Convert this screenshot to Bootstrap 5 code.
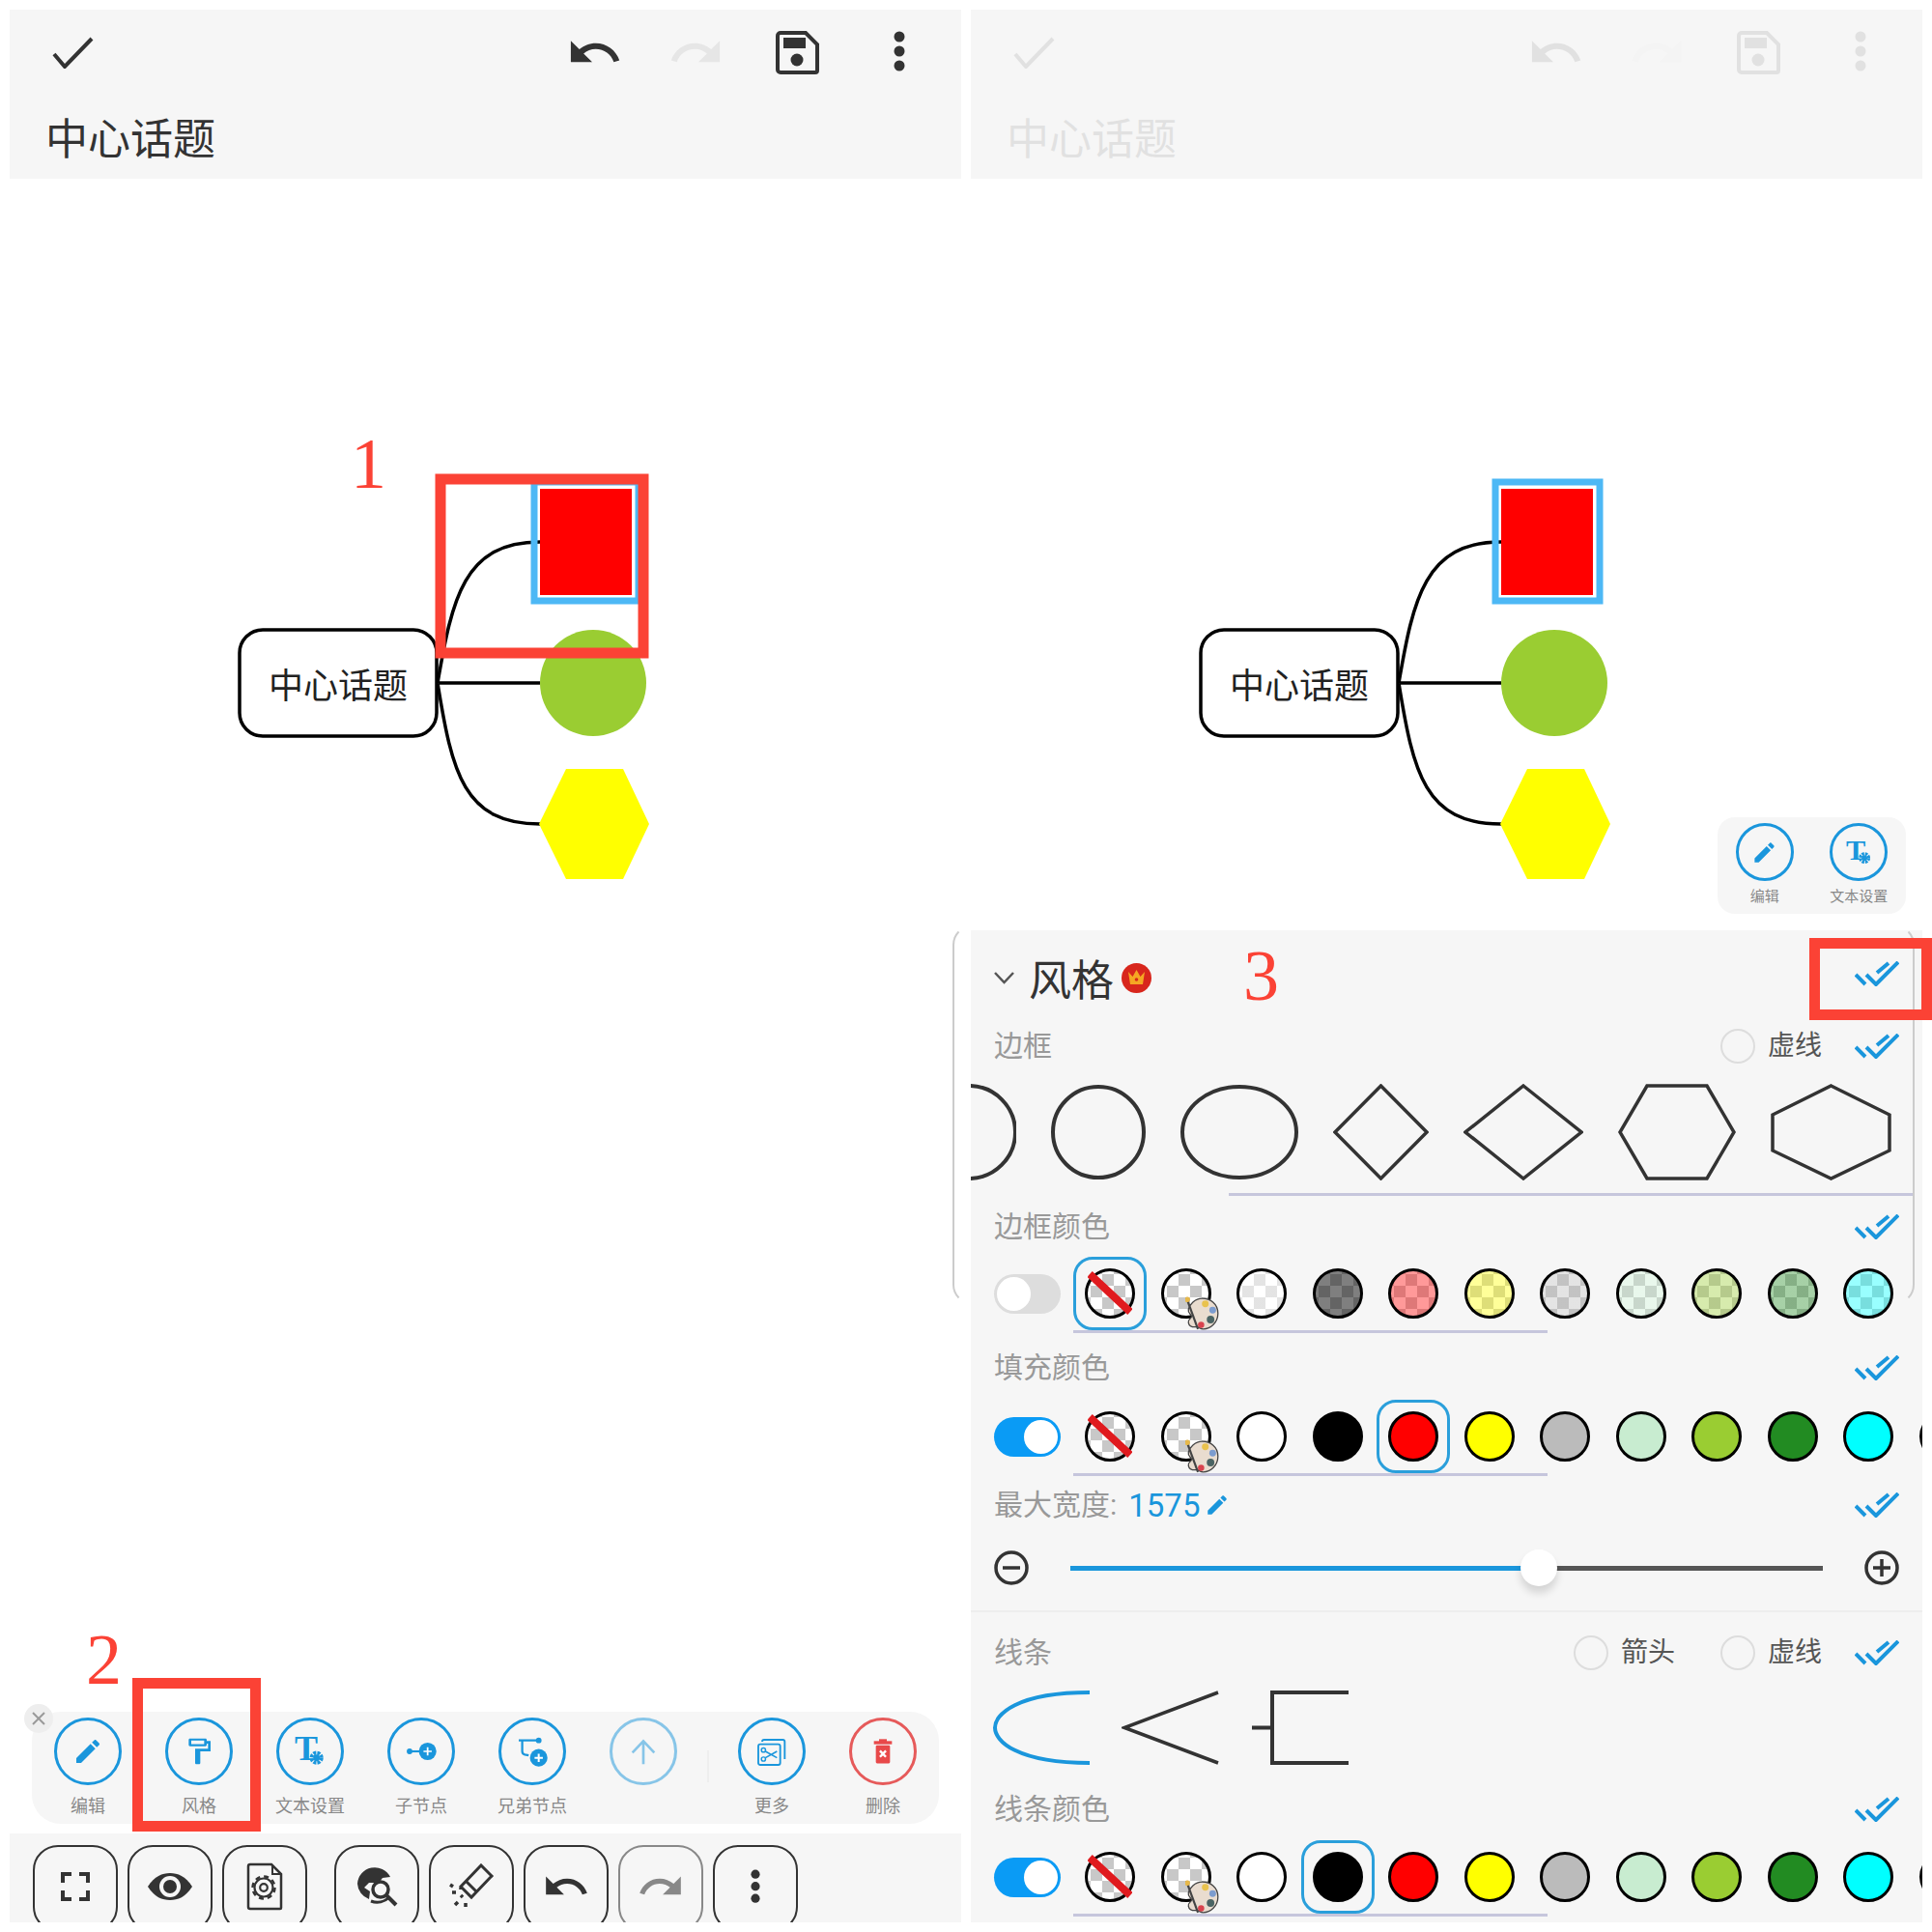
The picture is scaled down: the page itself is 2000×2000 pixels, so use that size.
<!doctype html>
<html lang="zh">
  <head>
    <meta charset="UTF-8" />
    <title>思维导图 风格</title>
    <link href="https://cdn.jsdelivr.net/npm/bootstrap@5.3.2/dist/css/bootstrap.min.css" rel="stylesheet" />
    <style>
      html, body { width: 2000px; height: 2000px; overflow: hidden; background: #fff; }
      body { font-family: Roboto, "Noto Sans CJK SC", sans-serif; line-height: 1; color: #333; }
      .stage { padding: 10px; gap: 10px; width: 2000px; height: 2000px; }
      .pane { width: 985px; height: 1980px; flex: 0 0 985px; position: relative; }

      /* top bar */
      .topbar { height: 175px; background: #f6f6f6; }
      .topbar-icons { height: 88px; padding-right: 12px; }
      .top-cell { width: 105px; }
      .top-cell-first { width: 130px; }
      .top-title { font-size: 44px; color: #333; padding-left: 37px; padding-top: 25px; }
      .topbar-dim > * { opacity: .1; }
      .ic-check { width: 43px; height: 33px; }
      .ic-undo { width: 59px; height: 59px; fill: #333; }
      .ic-redo-off { width: 59px; height: 59px; fill: #e6e6e6; }
      .ic-save { width: 45px; height: 45px; }
      .ic-dots { width: 12px; height: 44px; fill: #333; }
      .ic-dots-sm { width: 10px; height: 37px; fill: #333; }

      .map { width: 985px; height: 765px; display: block; }
      .map-node { font-size: 36px; fill: #222; font-family: "Noto Sans CJK SC", sans-serif; }
      .mark-no { font-family: "Liberation Serif", serif; fill: #fb4235; color: #fb4235; font-size: 74px; }

      /* floating action bar */
      .actions { margin: 0 23px 10px; height: 116px; background: #f6f6f6; border-radius: 30px; padding-left: .5px; position: relative; }
      .act-item { width: 115px; padding-top: 6px; }
      .act-circle { width: 70px; height: 70px; border: 3px solid #1a96dc; border-radius: 50%; fill: #1a96dc; color: #1a96dc; }
      .act-circle svg { width: 50%; height: 50%; }
      .act-label { font-size: 18px; color: #888; margin-top: 8px; height: 24px; line-height: 24px; font-family: "Noto Sans CJK SC", sans-serif; }
      .act-off { opacity: .5; }
      .act-red { border-color: #e65a5a; }
      .act-sep { width: 18px; }
      .act-sep-line { width: 2px; height: 33px; background: #eee; margin-top: 40px; }
      .act-close { position: absolute; left: -8px; top: -8px; width: 30px; height: 30px; border-radius: 50%; background: #eee; color: #999; }

      .mini { position: absolute; left: 773px; top: 836px; width: 195px; height: 100px; background: #f6f6f6; border-radius: 18px; }
      .mini .act-item { width: 98px; }
      .mini .act-circle { width: 60px; height: 60px; }
      .mini .act-label { font-size: 15px; margin-top: 6px; height: 18px; line-height: 18px; }

      /* bottom bar */
      .bottombar { height: 92px; background: #f6f6f6; padding: 12px 0 0 24px; gap: 10px; overflow: hidden; }
      .tool-btn { width: 88px; height: 90px; flex: 0 0 88px; padding: 0 0 4px; border: 2.5px solid #333; border-radius: 26px; background: transparent; }
      .tool-btn-off { border-color: #888; }
      .tool-gap { margin-left: 18px; }
      .ic-tool-undo { width: 50px; height: 50px; fill: #333; }
      .ic-tool-redo { width: 50px; height: 50px; fill: #888; }

      /* red annotations */
      .mark-box { position: absolute; border: 11px solid #fb4235; z-index: 3; }
      .mark-box-2 { left: 127px; top: 1727px; width: 133px; height: 159px; }
      .mark-box-3 { left: 868px; top: 961px; width: 127px; height: 85px; }
      .mark-txt { position: absolute; z-index: 3; }
      .mark-txt-2 { left: 79px; top: 1671px; }
      .mark-txt-3 { left: 282px; top: 963px; }

      /* style panel */
      .ghost { position: absolute; left: -19px; top: 948px; width: 996px; height: 392px; border: 2px solid #ccc; border-top-color: transparent; border-bottom-color: transparent; border-radius: 20px; z-index: 2; pointer-events: none; }
      .panel { position: absolute; left: 0; top: 953px; width: 985px; height: 1027px; background: #f6f6f6; overflow: hidden; z-index: 1; }
      .panel-head { height: 98px; padding: 0 24px; }
      .panel-title { font-size: 44px; color: #333; margin-left: 15px; font-family: "Noto Sans CJK SC", sans-serif; }
      .crown { width: 31px; height: 31px; margin-left: 8px; }
      .ic-chev { width: 21px; height: 13px; }
      .ic-dbl { width: 46px; height: 26px; }
      .ic-dbl-up { margin-bottom: 8px; }
      .opt-row { height: 44px; padding: 0 24px; }
      .opt-label { font-size: 30px; color: #999; }
      .opt-text { font-size: 28px; color: #555; margin: 0 34px 0 12px; }
      .opt-text-wide { margin-right: 47px; }
      .opt-radio.form-check-input { width: 36px; height: 36px; margin: 0 1px 0 0; border: 2px solid #ddd; background-color: transparent; }
      .opt-num { font-size: 33px; color: #1a96dc; margin-left: 12px; }
      .ic-pen { width: 26px; height: 26px; fill: #1a96dc; margin-left: 5px; }

      .shapes { margin-top: 17px; height: 100px; gap: 36px; }
      .underline-a { margin: 13px 8px 0 267px; height: 3px; background: #c6c6dc; }
      .mt-sw { margin-top: 10px; }
      .mt-sw-first { margin-top: 9px; }
      .mt-fill { margin-top: 14px; }
      .mt-sw-fill { margin-top: 11px; }
      .mt-line { margin-top: 20px; }
      .swatches { height: 76px; padding-left: 24px; gap: 2.5px; }
      .switch { width: 69px; height: 41px; flex: 0 0 69px; border-radius: 21px; background: #ddd; margin-right: 10.5px; padding: 3px; }
      .switch-on { background: #0a9bf5; justify-content: flex-end; }
      .switch-knob { width: 35px; height: 35px; border-radius: 50%; background: #fff; }
      .sw-cell { width: 76px; height: 76px; flex: 0 0 76px; border: 3px solid transparent; border-radius: 20px; }
      .sw-on { border-color: #2a9fdb; }
      .sw { width: 52px; height: 52px; border-radius: 50%; border: 3px solid #000; position: relative; }
      .sw-chk { background: linear-gradient(var(--tint), var(--tint)), repeating-conic-gradient(#c8c8c8 0 25%, #fff 0 50%) 3px 3px / 24px 24px; }
      .t-none { --tint: transparent; }
      .t-white { --tint: rgba(255, 255, 255, .5); }
      .t-black { --tint: rgba(0, 0, 0, .5); }
      .t-red { --tint: rgba(255, 0, 0, .4); }
      .t-yellow { --tint: rgba(255, 255, 0, .4); }
      .t-gray { --tint: rgba(187, 187, 187, .4); }
      .t-mint { --tint: rgba(200, 236, 208, .4); }
      .t-lime { --tint: rgba(154, 205, 50, .4); }
      .t-forest { --tint: rgba(34, 139, 34, .4); }
      .t-cyan { --tint: rgba(0, 255, 255, .4); }
      .c-white { background: #fff; }
      .c-black { background: #000; }
      .c-red { background: #f00; }
      .c-yellow { background: #ff0; }
      .c-gray { background: #bbb; }
      .c-mint { background: #c8ecd0; }
      .c-lime { background: #9acd32; }
      .c-forest { background: #228b22; }
      .c-cyan { background: #0ff; }
      .sw-slash { position: absolute; left: 0; top: 0; width: 46px; height: 46px; }
      .sw-pal { position: absolute; left: 22px; top: 26px; width: 36px; height: 36px; }
      .underline-b { margin-left: 106px; width: 491px; height: 3px; background: #c6c6dc; }

      .slider-row { margin-top: 23px; height: 40px; padding: 0 24px; }
      .ic-round { width: 36px; height: 36px; flex: 0 0 36px; }
      .slider-wrap { margin: 0 43px; position: relative; }
      .slider-bar.progress { height: 5px; background: #555; border-radius: 0; }
      .slider-bar .progress-bar { background: #1a96dc; }
      .slider-thumb { position: absolute; top: -17px; width: 38px; height: 38px; margin-left: -19px; border-radius: 50%; background: #fff; box-shadow: 0 7px 9px rgba(0, 0, 0, .14); }
      .sep { margin-top: 24px; height: 2px; background: #eee; }
      .lines { margin-top: 17px; height: 77px; padding-left: 22px; gap: 32px; }
      .lines svg { width: 102px; height: 77px; }
    </style>
  </head>
  <body>
    <svg width="0" height="0" class="position-absolute">
      <defs>
        <symbol id="i-check" viewBox="0 0 43 33"><path d="M2 18l11 13L41 2" fill="none" stroke="#333" stroke-width="4" /></symbol>
        <symbol id="i-undo" viewBox="0 0 24 24"><path d="M12.5 8c-2.65 0-5.05.99-6.9 2.6L2 7v9h9l-3.62-3.62c1.39-1.16 3.16-1.88 5.12-1.88 3.54 0 6.55 2.31 7.6 5.5l2.37-.78C21.08 11.03 17.15 8 12.5 8z" /></symbol>
        <symbol id="i-redo" viewBox="0 0 24 24"><path d="M18.4 10.6C16.55 8.99 14.15 8 11.5 8c-4.65 0-8.58 3.03-9.96 7.22L3.9 16c1.05-3.19 4.05-5.5 7.6-5.5 1.95 0 3.73.72 5.12 1.88L13 16h9V7l-3.6 3.6z" /></symbol>
        <symbol id="i-save" viewBox="0 0 45 45"><path d="M5 2h26l12 12v27a2 2 0 0 1-2 2H5a3 3 0 0 1-3-3V5a3 3 0 0 1 3-3z" fill="none" stroke="#333" stroke-width="4" /><rect x="8" y="7" width="23" height="11" fill="#333" /><circle cx="22" cy="30" r="6.5" fill="#333" /></symbol>
        <symbol id="i-dots" viewBox="0 0 12 44"><circle cx="6" cy="6" r="5.5" /><circle cx="6" cy="21" r="5.5" /><circle cx="6" cy="36" r="5.5" /></symbol>
        <symbol id="i-pen" viewBox="0 0 24 24"><path d="M3 17.25V21h3.75L17.81 9.94l-3.75-3.75L3 17.25zM20.71 7.04c.39-.39.39-1.02 0-1.41l-2.34-2.34c-.39-.39-1.02-.39-1.41 0l-1.83 1.83 3.75 3.75 1.83-1.83z" /></symbol>
        <symbol id="i-roller" viewBox="0 0 24 24"><path d="M18 4V3c0-.55-.45-1-1-1H5c-.55 0-1 .45-1 1v4c0 .55.45 1 1 1h12c.55 0 1-.45 1-1V6h1v4H9v11c0 .55.45 1 1 1h2c.55 0 1-.45 1-1v-9h8V4h-3z" /><rect x="6" y="3.6" width="10" height="2.8" fill="#f6f6f6" /></symbol>
        <symbol id="i-textset" viewBox="0 0 24 24"><text x="0" y="19" font-family="Liberation Serif, serif" font-weight="bold" font-size="27">T</text><circle cx="17" cy="17" r="3.8" stroke="currentColor" stroke-width="3" fill="none" stroke-dasharray="2.2 .8" /><circle cx="17" cy="17" r="2.6" /></symbol>
        <symbol id="i-child" viewBox="0 0 24 24"><circle cx="3" cy="12" r="2.2" /><rect x="3" y="11.2" width="10" height="1.6" /><circle cx="17" cy="12" r="6.8" /><path d="M13.8 12h6.4M17 8.8v6.4" stroke="#fff" stroke-width="1.3" /></symbol>
        <symbol id="i-sibling" viewBox="0 0 24 24"><path d="M1.5 3.5H17M4.2 3.5V12q0 2 2 2.5l3 .6" fill="none" stroke="currentColor" stroke-width="1.7" /><circle cx="17" cy="3.5" r="2.2" /><circle cx="17" cy="17" r="6.8" /><path d="M13.8 17h6.4M17 13.8v6.4" stroke="#fff" stroke-width="1.5" /></symbol>
        <symbol id="i-up" viewBox="0 0 24 24"><path d="M12 22V5M3.5 13L12 4l8.5 9" fill="none" stroke="currentColor" stroke-width="2" /></symbol>
        <symbol id="i-more" viewBox="0 0 24 24"><path d="M4.5 4.5q0-1.5 1.500-1.500h14.500q1.500 0 1.500 1.500v13.500" fill="none" stroke="currentColor" stroke-width="1.400" /><rect x="1.500" y="6.500" width="17" height="16" rx="1.500" fill="#f6f6f6" stroke="currentColor" stroke-width="1.400" /><circle cx="5.500" cy="11" r="1.600" fill="none" stroke="currentColor" stroke-width="1.100" /><circle cx="5.500" cy="18" r="1.600" fill="none" stroke="currentColor" stroke-width="1.100" /><path d="M7 12l9 5M7 17l9-5" stroke="currentColor" stroke-width="1.200" fill="none" /></symbol>
        <symbol id="i-trash" viewBox="0 0 24 24"><rect x="5" y="4" width="14" height="2.500" fill="#e8494a" /><rect x="9" y="2.500" width="6" height="2" fill="#e8494a" /><rect x="6.500" y="7.300" width="11" height="14" rx="1" fill="#e8494a" /><path d="M9.700 11.500l4.600 4.800M14.300 11.500l-4.600 4.800" stroke="#fff" stroke-width="1.800" /></symbol>
        <symbol id="i-full" viewBox="0 0 30 30"><path d="M2 11V2h9M19 2h9v9M28 19v9h-9M11 28H2v-9" fill="none" stroke="#333" stroke-width="4" /></symbol>
        <symbol id="i-eye" viewBox="0 0 48 30"><path d="M1 15C8 4 16 1 24 1s16 3 23 14c-7 11-15 14-23 14S8 26 1 15z" fill="#333" /><circle cx="24" cy="15" r="11" fill="#f6f6f6" /><circle cx="24" cy="15" r="7" fill="#333" /></symbol>
        <symbol id="i-doc" viewBox="0 0 38 50"><path d="M4 2h22l10 10v35a1 1 0 0 1-1 1H4a2 2 0 0 1-2-2V4a2 2 0 0 1 2-2z" fill="none" stroke="#333" stroke-width="2.500" /><path d="M27 2v10h9" fill="none" stroke="#333" stroke-width="2" /><circle cx="18" cy="26" r="9.500" fill="none" stroke="#333" stroke-width="2.200" /><circle cx="18" cy="26" r="11.500" fill="none" stroke="#333" stroke-width="2.500" stroke-dasharray="5 4" /><circle cx="18" cy="26" r="3.800" fill="none" stroke="#333" stroke-width="2.200" /></symbol>
        <symbol id="i-globe" viewBox="0 0 46 46"><path d="M3 20A18 18 0 0 1 37 13L29 14 25 19H15L10 24 16 28 15 36A18 18 0 0 1 3 20z" fill="#333" /><path d="M17 38A18 18 0 0 0 36 34" fill="none" stroke="#333" stroke-width="3" /><circle cx="27" cy="26" r="8" fill="#f6f6f6" stroke="#333" stroke-width="3.500" /><path d="M33 32l10 10" stroke="#333" stroke-width="4" /></symbol>
        <symbol id="i-brush" viewBox="0 0 48 48"><path d="M13 24l11 11 21-22L34 2z" fill="none" stroke="#333" stroke-width="3" /><path d="M18 18l11 11" stroke="#333" stroke-width="3" /><path d="M13 33l2 2M4 30h4M10 40l-3 3M18 41v4M2 22l3 2M13 27v-2" stroke="#333" stroke-width="3.500" /></symbol>
        <symbol id="i-dbl" viewBox="0 0 46 26"><path d="M1 14l10 10M12 14l10 10L45 1M23 12l12-10" fill="none" stroke="#1a96dc" stroke-width="4" /></symbol>
        <symbol id="i-minus" viewBox="0 0 36 36"><circle cx="18" cy="18" r="16" fill="none" stroke="#333" stroke-width="3.500" /><path d="M9 18h18" stroke="#333" stroke-width="3.500" /></symbol>
        <symbol id="i-plus" viewBox="0 0 36 36"><circle cx="18" cy="18" r="16" fill="none" stroke="#333" stroke-width="3.500" /><path d="M9 18h18M18 9v18" stroke="#333" stroke-width="3.500" /></symbol>
        <symbol id="i-slash" viewBox="0 0 46 46"><path d="M2 3l42 39" stroke="#e01a1e" stroke-width="8" /></symbol>
        <symbol id="i-pal" viewBox="0 0 33 33"><path d="M16 2c8 0 15 5 15 14s-7 15-14 15c-3 0-4-2-6-2S4 30 3 25c-1-3 3-4 3-6S2 16 3 12 9 2 16 2z" fill="#e9dccf" stroke="#444" stroke-width="1.200" /><circle cx="19" cy="7" r="3.200" fill="#e9c24e" /><circle cx="26" cy="13" r="3.200" fill="#7c9ccf" /><circle cx="24" cy="22" r="3.600" fill="#4a6464" /><circle cx="15" cy="27" r="3" fill="#d9434e" /><path d="M1 1l11 30" stroke="#444" stroke-width="2" /><circle cx="2" cy="3" r="2.500" fill="#e6b84a" /></symbol>
      </defs>
    </svg>

    <div class="stage d-flex">
      <!-- left phone -->
      <div class="pane d-flex flex-column">
        <div class="topbar">
          <div class="topbar-icons d-flex align-items-center">
            <div class="top-cell-first d-flex justify-content-center"><svg class="ic-check"><use href="#i-check" /></svg></div>
            <div class="ms-auto d-flex">
              <div class="top-cell d-flex justify-content-center"><svg class="ic-undo"><use href="#i-undo" /></svg></div>
              <div class="top-cell d-flex justify-content-center"><svg class="ic-redo-off"><use href="#i-redo" /></svg></div>
              <div class="top-cell d-flex justify-content-center align-items-center"><svg class="ic-save"><use href="#i-save" /></svg></div>
              <div class="top-cell d-flex justify-content-center align-items-center"><svg class="ic-dots"><use href="#i-dots" /></svg></div>
            </div>
          </div>
          <div class="top-title">中心话题</div>
        </div>

        <svg class="map" viewBox="10 185 985 765">
          <path d="M453 707C468 620 480 561 559 561M453 707H559M453 707C468 800 480 853 559 853" fill="none" stroke="#000" stroke-width="3.500" />
          <rect x="248" y="652" width="204" height="110" rx="24" fill="#fff" stroke="#000" stroke-width="3.500" />
          <text class="map-node" x="350" y="723" text-anchor="middle">中心话题</text>
          <rect x="553" y="499" width="108" height="123" fill="none" stroke="#4db8f5" stroke-width="7" />
          <rect x="559" y="506" width="95" height="110" fill="#f00" />
          <circle cx="614" cy="707" r="55" fill="#9acd32" />
          <polygon points="586,796 645,796 672,853 645,910 586,910 558,853" fill="#ff0" />
          <rect x="456" y="496" width="210" height="180" fill="none" stroke="#fb4235" stroke-width="11" />
          <text class="mark-no" x="363" y="505">1</text>
        </svg>

        <div class="flex-grow-1"></div>

        <div class="actions d-flex">
          <div class="act-close d-flex align-items-center justify-content-center"><svg width="14" height="14" viewBox="0 0 14 14"><path d="M1 1l12 12M13 1L1 13" stroke="#999" stroke-width="2" /></svg></div>
          <div class="act-item d-flex flex-column align-items-center"><div class="act-circle d-flex align-items-center justify-content-center"><svg><use href="#i-pen" /></svg></div><div class="act-label">编辑</div></div>
          <div class="act-item d-flex flex-column align-items-center"><div class="act-circle d-flex align-items-center justify-content-center"><svg><use href="#i-roller" /></svg></div><div class="act-label">风格</div></div>
          <div class="act-item d-flex flex-column align-items-center"><div class="act-circle d-flex align-items-center justify-content-center"><svg><use href="#i-textset" /></svg></div><div class="act-label">文本设置</div></div>
          <div class="act-item d-flex flex-column align-items-center"><div class="act-circle d-flex align-items-center justify-content-center"><svg><use href="#i-child" /></svg></div><div class="act-label">子节点</div></div>
          <div class="act-item d-flex flex-column align-items-center"><div class="act-circle d-flex align-items-center justify-content-center"><svg><use href="#i-sibling" /></svg></div><div class="act-label">兄弟节点</div></div>
          <div class="act-item d-flex flex-column align-items-center"><div class="act-circle act-off d-flex align-items-center justify-content-center"><svg><use href="#i-up" /></svg></div></div>
          <div class="act-sep d-flex justify-content-center"><div class="act-sep-line"></div></div>
          <div class="act-item d-flex flex-column align-items-center"><div class="act-circle d-flex align-items-center justify-content-center"><svg><use href="#i-more" /></svg></div><div class="act-label">更多</div></div>
          <div class="act-item d-flex flex-column align-items-center"><div class="act-circle act-red d-flex align-items-center justify-content-center"><svg><use href="#i-trash" /></svg></div><div class="act-label">删除</div></div>
        </div>

        <div class="bottombar d-flex">
          <button class="btn tool-btn d-flex align-items-center justify-content-center"><svg width="30" height="30"><use href="#i-full" /></svg></button>
          <button class="btn tool-btn d-flex align-items-center justify-content-center"><svg width="48" height="30"><use href="#i-eye" /></svg></button>
          <button class="btn tool-btn d-flex align-items-center justify-content-center"><svg width="38" height="50"><use href="#i-doc" /></svg></button>
          <button class="btn tool-btn tool-gap d-flex align-items-center justify-content-center"><svg width="46" height="46"><use href="#i-globe" /></svg></button>
          <button class="btn tool-btn d-flex align-items-center justify-content-center"><svg width="48" height="48"><use href="#i-brush" /></svg></button>
          <button class="btn tool-btn d-flex align-items-center justify-content-center"><svg class="ic-tool-undo"><use href="#i-undo" /></svg></button>
          <button class="btn tool-btn tool-btn-off d-flex align-items-center justify-content-center"><svg class="ic-tool-redo"><use href="#i-redo" /></svg></button>
          <button class="btn tool-btn d-flex align-items-center justify-content-center"><svg class="ic-dots-sm"><use href="#i-dots" /></svg></button>
        </div>

        <div class="mark-box mark-box-2"></div>
        <div class="mark-txt mark-txt-2 mark-no">2</div>
      </div>

      <!-- right phone -->
      <div class="pane">
        <div class="topbar topbar-dim">
          <div class="topbar-icons d-flex align-items-center">
            <div class="top-cell-first d-flex justify-content-center"><svg class="ic-check"><use href="#i-check" /></svg></div>
            <div class="ms-auto d-flex">
              <div class="top-cell d-flex justify-content-center"><svg class="ic-undo"><use href="#i-undo" /></svg></div>
              <div class="top-cell d-flex justify-content-center"><svg class="ic-redo-off"><use href="#i-redo" /></svg></div>
              <div class="top-cell d-flex justify-content-center align-items-center"><svg class="ic-save"><use href="#i-save" /></svg></div>
              <div class="top-cell d-flex justify-content-center align-items-center"><svg class="ic-dots"><use href="#i-dots" /></svg></div>
            </div>
          </div>
          <div class="top-title">中心话题</div>
        </div>

        <svg class="map" viewBox="10 185 985 765">
          <path d="M453 707C468 620 480 561 559 561M453 707H559M453 707C468 800 480 853 559 853" fill="none" stroke="#000" stroke-width="3.500" />
          <rect x="248" y="652" width="204" height="110" rx="24" fill="#fff" stroke="#000" stroke-width="3.500" />
          <text class="map-node" x="350" y="723" text-anchor="middle">中心话题</text>
          <rect x="553" y="499" width="108" height="123" fill="none" stroke="#4db8f5" stroke-width="7" />
          <rect x="559" y="506" width="95" height="110" fill="#f00" />
          <circle cx="614" cy="707" r="55" fill="#9acd32" />
          <polygon points="586,796 645,796 672,853 645,910 586,910 558,853" fill="#ff0" />
        </svg>

        <div class="mini d-flex">
          <div class="act-item d-flex flex-column align-items-center"><div class="act-circle d-flex align-items-center justify-content-center"><svg><use href="#i-pen" /></svg></div><div class="act-label">编辑</div></div>
          <div class="act-item d-flex flex-column align-items-center"><div class="act-circle d-flex align-items-center justify-content-center"><svg><use href="#i-textset" /></svg></div><div class="act-label">文本设置</div></div>
        </div>

        <div class="ghost"></div>

        <div class="panel">
          <div class="panel-head d-flex align-items-center">
            <svg class="ic-chev" viewBox="0 0 21 13"><path d="M1 1l9.500 10L20 1" fill="none" stroke="#555" stroke-width="2.500" /></svg>
            <div class="panel-title">风格</div>
            <svg class="crown" viewBox="0 0 31 31"><circle cx="15.500" cy="15.500" r="15.500" fill="#d8261c" /><path d="M7 9l4.500 5L15.500 7l4 7L24 9l-2 13H9z" fill="#f5a623" /><circle cx="15.500" cy="17" r="1.800" fill="#d8261c" /></svg>
            <svg class="ic-dbl ic-dbl-up ms-auto"><use href="#i-dbl" /></svg>
          </div>

          <div class="opt-row d-flex align-items-center">
            <div class="opt-label">边框</div>
            <input class="form-check-input opt-radio ms-auto" type="radio" />
            <div class="opt-text">虚线</div>
            <svg class="ic-dbl"><use href="#i-dbl" /></svg>
          </div>

          <div class="shapes d-flex">
            <svg width="47" height="100" viewBox="0 0 47 100"><circle cx="-2" cy="50" r="48" fill="none" stroke="#333" stroke-width="4" /></svg>
            <svg width="98" height="100" viewBox="0 0 98 100"><circle cx="49" cy="50" r="47" fill="none" stroke="#333" stroke-width="4" /></svg>
            <svg width="122" height="100" viewBox="0 0 122 100"><ellipse cx="61" cy="50" rx="59" ry="47" fill="none" stroke="#333" stroke-width="4" /></svg>
            <svg width="99" height="100" viewBox="0 0 99 100"><polygon points="49.500,2 97,50 49.500,98 2,50" fill="none" stroke="#333" stroke-width="3.500" /></svg>
            <svg width="124" height="100" viewBox="0 0 124 100"><polygon points="62,2 122,50 62,98 2,50" fill="none" stroke="#333" stroke-width="3.500" /></svg>
            <svg width="122" height="100" viewBox="0 0 122 100"><polygon points="30,2 92,2 120,50 92,98 30,98 2,50" fill="none" stroke="#333" stroke-width="3.500" /></svg>
            <svg width="125" height="100" viewBox="0 0 125 100"><polygon points="62.500,2 123,32 123,69 62.500,98 2,69 2,32" fill="none" stroke="#333" stroke-width="3.500" /></svg>
          </div>
          <div class="underline-a"></div>

          <div class="opt-row d-flex align-items-center justify-content-between mt-sw">
            <div class="opt-label">边框颜色</div>
            <svg class="ic-dbl"><use href="#i-dbl" /></svg>
          </div>
          <div class="swatches d-flex align-items-center mt-sw-first">
            <div class="switch d-flex"><div class="switch-knob"></div></div>
            <div class="sw-cell sw-on d-flex align-items-center justify-content-center"><div class="sw sw-chk t-none"><svg class="sw-slash"><use href="#i-slash" /></svg></div></div>
            <div class="sw-cell d-flex align-items-center justify-content-center"><div class="sw sw-chk t-none"><svg class="sw-pal"><use href="#i-pal" /></svg></div></div>
            <div class="sw-cell d-flex align-items-center justify-content-center"><div class="sw sw-chk t-white"></div></div>
            <div class="sw-cell d-flex align-items-center justify-content-center"><div class="sw sw-chk t-black"></div></div>
            <div class="sw-cell d-flex align-items-center justify-content-center"><div class="sw sw-chk t-red"></div></div>
            <div class="sw-cell d-flex align-items-center justify-content-center"><div class="sw sw-chk t-yellow"></div></div>
            <div class="sw-cell d-flex align-items-center justify-content-center"><div class="sw sw-chk t-gray"></div></div>
            <div class="sw-cell d-flex align-items-center justify-content-center"><div class="sw sw-chk t-mint"></div></div>
            <div class="sw-cell d-flex align-items-center justify-content-center"><div class="sw sw-chk t-lime"></div></div>
            <div class="sw-cell d-flex align-items-center justify-content-center"><div class="sw sw-chk t-forest"></div></div>
            <div class="sw-cell d-flex align-items-center justify-content-center"><div class="sw sw-chk t-cyan"></div></div>
          </div>
          <div class="underline-b"></div>

          <div class="opt-row d-flex align-items-center justify-content-between mt-fill">
            <div class="opt-label">填充颜色</div>
            <svg class="ic-dbl"><use href="#i-dbl" /></svg>
          </div>
          <div class="swatches d-flex align-items-center mt-sw-fill">
            <div class="switch switch-on d-flex"><div class="switch-knob"></div></div>
            <div class="sw-cell d-flex align-items-center justify-content-center"><div class="sw sw-chk t-none"><svg class="sw-slash"><use href="#i-slash" /></svg></div></div>
            <div class="sw-cell d-flex align-items-center justify-content-center"><div class="sw sw-chk t-none"><svg class="sw-pal"><use href="#i-pal" /></svg></div></div>
            <div class="sw-cell d-flex align-items-center justify-content-center"><div class="sw c-white"></div></div>
            <div class="sw-cell d-flex align-items-center justify-content-center"><div class="sw c-black"></div></div>
            <div class="sw-cell sw-on d-flex align-items-center justify-content-center"><div class="sw c-red"></div></div>
            <div class="sw-cell d-flex align-items-center justify-content-center"><div class="sw c-yellow"></div></div>
            <div class="sw-cell d-flex align-items-center justify-content-center"><div class="sw c-gray"></div></div>
            <div class="sw-cell d-flex align-items-center justify-content-center"><div class="sw c-mint"></div></div>
            <div class="sw-cell d-flex align-items-center justify-content-center"><div class="sw c-lime"></div></div>
            <div class="sw-cell d-flex align-items-center justify-content-center"><div class="sw c-forest"></div></div>
            <div class="sw-cell d-flex align-items-center justify-content-center"><div class="sw c-cyan"></div></div>
            <div class="sw-cell d-flex align-items-center justify-content-center"><div class="sw c-white"></div></div>
          </div>
          <div class="underline-b"></div>

          <div class="opt-row d-flex align-items-center mt-2">
            <div class="opt-label">最大宽度:</div>
            <div class="opt-num">1575</div>
            <svg class="ic-pen"><use href="#i-pen" /></svg>
            <svg class="ic-dbl ms-auto"><use href="#i-dbl" /></svg>
          </div>
          <div class="slider-row d-flex align-items-center">
            <svg class="ic-round"><use href="#i-minus" /></svg>
            <div class="slider-wrap flex-grow-1">
              <div class="progress slider-bar"><div class="progress-bar" style="width: 62.2%"></div></div>
              <div class="slider-thumb" style="left: 62.2%"></div>
            </div>
            <svg class="ic-round"><use href="#i-plus" /></svg>
          </div>
          <div class="sep"></div>

          <div class="opt-row d-flex align-items-center mt-line">
            <div class="opt-label">线条</div>
            <input class="form-check-input opt-radio ms-auto" type="radio" />
            <div class="opt-text opt-text-wide">箭头</div>
            <input class="form-check-input opt-radio" type="radio" />
            <div class="opt-text">虚线</div>
            <svg class="ic-dbl"><use href="#i-dbl" /></svg>
          </div>
          <div class="lines d-flex">
            <svg viewBox="0 0 102 77"><path d="M101 2C25 2 3 25 3 38.500S25 75 101 75" fill="none" stroke="#1a96dc" stroke-width="4" /></svg>
            <svg viewBox="0 0 102 77"><path d="M100 2L3 38.500 100 75" fill="none" stroke="#333" stroke-width="3.500" /></svg>
            <svg viewBox="0 0 102 77"><path d="M101 2H22V75H101M1 38.500H22" fill="none" stroke="#333" stroke-width="4" /></svg>
          </div>

          <div class="opt-row d-flex align-items-center justify-content-between mt-4">
            <div class="opt-label">线条颜色</div>
            <svg class="ic-dbl"><use href="#i-dbl" /></svg>
          </div>
          <div class="swatches d-flex align-items-center mt-sw">
            <div class="switch switch-on d-flex"><div class="switch-knob"></div></div>
            <div class="sw-cell d-flex align-items-center justify-content-center"><div class="sw sw-chk t-none"><svg class="sw-slash"><use href="#i-slash" /></svg></div></div>
            <div class="sw-cell d-flex align-items-center justify-content-center"><div class="sw sw-chk t-none"><svg class="sw-pal"><use href="#i-pal" /></svg></div></div>
            <div class="sw-cell d-flex align-items-center justify-content-center"><div class="sw c-white"></div></div>
            <div class="sw-cell sw-on d-flex align-items-center justify-content-center"><div class="sw c-black"></div></div>
            <div class="sw-cell d-flex align-items-center justify-content-center"><div class="sw c-red"></div></div>
            <div class="sw-cell d-flex align-items-center justify-content-center"><div class="sw c-yellow"></div></div>
            <div class="sw-cell d-flex align-items-center justify-content-center"><div class="sw c-gray"></div></div>
            <div class="sw-cell d-flex align-items-center justify-content-center"><div class="sw c-mint"></div></div>
            <div class="sw-cell d-flex align-items-center justify-content-center"><div class="sw c-lime"></div></div>
            <div class="sw-cell d-flex align-items-center justify-content-center"><div class="sw c-forest"></div></div>
            <div class="sw-cell d-flex align-items-center justify-content-center"><div class="sw c-cyan"></div></div>
            <div class="sw-cell d-flex align-items-center justify-content-center"><div class="sw c-white"></div></div>
          </div>
          <div class="underline-b"></div>
        </div>

        <div class="mark-box mark-box-3"></div>
        <div class="mark-txt mark-txt-3 mark-no">3</div>
      </div>
    </div>
  </body>
</html>
